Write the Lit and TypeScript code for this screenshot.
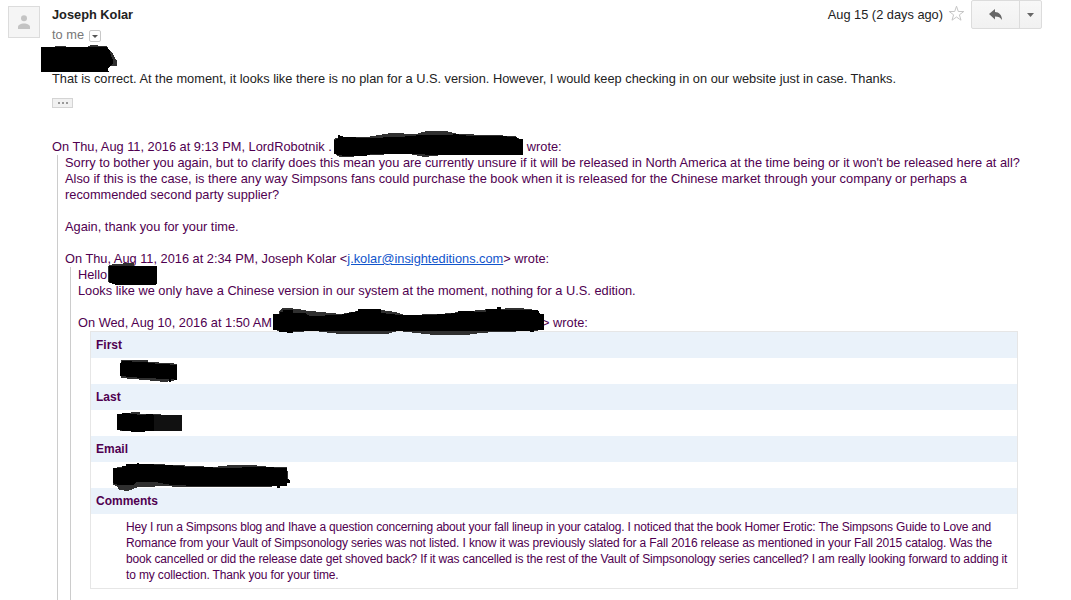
import { LitElement, html, css, svg } from "lit";
import { customElement } from "lit/decorators.js";

/* Marker strokes: grey fringe under a solid black core. */
const strokes: { grey: string; core: string }[] = [
  {
    grey: "M55 47V46H66V47ZM88 47V46H90V45H98V46H107V48L112 52L115 58L117 61V66H110L108 68V47Z",
    core: "M41 47H107L110 51L111 56L113 60V63L110 66L108 68V71H109V72H41Z",
  },
  {
    grey: "M334 139L339 137H367L391 133L416 134L427 131H446L458 134L490 135L515 136L520 139L510 152L443 155L424 157L410 154L358 155L353 157L340 157L336 155Z",
    core: "M334 140L338 139V135L345 137L367 138L399 137L421 135L450 135L455 134L470 136L497 136L516 137L519 139H523V155H450L400 154L371 154L366 156H345L334 154Z",
  },
  {
    grey: "M108 266L113 264H123V263H134V266L136 284L116 285L108 282Z",
    core: "M109 266H157V284L155 285H122L116 285L109 282Z",
  },
  {
    grey: "M279 311L282 308H293V309H301V310L341 314L358 311L381 310L395 312L404 315L440 314L490 309L520 308L536 310L538 331L494 332L481 333L466 335H434L398 331L387 334H340L315 331L293 332L289 332L277 331Z",
    core: "M273 314H280V312H283V310H293V313L305 313L310 316L340 315L358 311V309H381V313L400 315L430 315L458 313V311H462L486 312V309H497V307H501V310H523L538 310L540 314H544V330H534V332H530V331H293V333H287V332H279V330H273Z",
  },
  {
    grey: "M121 362V360H148V362L170 363L177 364V380L165 382L145 380L121 378Z",
    core: "M120 363L123 361L140 362H148V363L177 365V380L171 379V382H169V379L142 378L120 376Z",
  },
  {
    grey: "M117 414L131 413V412H140V414L181 415L182 431L150 431L120 431Z",
    core: "M117 414L126 413L140 415L151 414L154 415V431L136 432L117 430Z",
  },
  {
    grey: "M113 468L120 467L155 464L195 466L213 467L232 465H253L270 467L287 467L289 483L270 487H172V486L138 487L128 491L119 490L117 486L113 485Z",
    core: "M113 468H122V466H126V464H136L138 463L140 464L168 465L189 467H200L225 468L260 467L287 468V479L290 480V483H287V486H280V488H277V486L200 486L172 485L155 482L137 482L133 485L118 485L113 483Z",
  },
];

@customElement("app-root")
export class AppRoot extends LitElement {
  static styles = css`
    :host {
      display: block;
      position: relative;
      box-sizing: border-box;
      width: 1071px;
      height: 600px;
      overflow: hidden;
      background: #fff;
      color: #222;
      font: 12.8px/16px "Liberation Sans", Arial, sans-serif;
      white-space: nowrap;
    }
    .header {
      display: flex;
      height: 71px;
      box-sizing: border-box;
      padding-left: 8px;
    }
    .avatar {
      width: 30px;
      height: 30px;
      margin-top: 6px;
      border: 1px solid #dcdcdc;
      background: #f5f5f5;
    }
    .who {
      margin: 6px 0 0 12px;
      flex: 1;
    }
    .name {
      font-weight: bold;
      line-height: 17px;
    }
    .to {
      display: flex;
      color: #777;
      line-height: 16px;
      padding-top: 4px;
    }
    .details {
      box-sizing: border-box;
      width: 12px;
      height: 12px;
      border: 1px solid #c8c8c8;
      border-radius: 2px;
      margin: 3px 0 0 5px;
      display: block;
    }
    .date {
      margin: 6px 5px 0 0;
      line-height: 17px;
    }
    .star {
      margin-top: 5px;
    }
    .buttons {
      display: flex;
      box-sizing: border-box;
      width: 71px;
      height: 29px;
      margin: 0 29px 0 6px;
      border: 1px solid #dcdcdc;
      border-radius: 2px;
      background: linear-gradient(#f8f8f8, #f1f1f1);
    }
    .reply {
      width: 47px;
      border-right: 1px solid #dcdcdc;
    }
    .more {
      flex: 1;
    }
    svg {
      display: block;
    }
    .body {
      padding-left: 52px;
    }
    .trim {
      display: flex;
      box-sizing: border-box;
      width: 21px;
      height: 10px;
      margin: 11px 0 30px;
      border: 1px solid #d4d4d4;
      background: #f1f1f1;
      align-items: center;
      justify-content: center;
      gap: 2px;
    }
    .trim i {
      width: 2px;
      height: 2px;
      background: #999;
    }
    .quoted {
      padding-top: 1px;
      color: #500050;
    }
    .quote {
      margin-left: 5px;
      padding-left: 7px;
      border-left: 1px solid #ccc;
    }
    .deep {
      padding-bottom: 30px;
    }
    .gap1 {
      display: inline-block;
      width: 195px;
    }
    .gap2 {
      display: inline-block;
      width: 270px;
    }
    .blank {
      height: 16px;
    }
    .mail {
      color: #15c;
      text-decoration: underline;
    }
    .form {
      box-sizing: border-box;
      width: 928px;
      height: 258px;
      margin-left: 12px;
      border: 1px solid #e6e6e6;
      font-size: 12px;
    }
    .label {
      height: 26px;
      box-sizing: border-box;
      padding: 5px 5px 0;
      background: #eaf2fa;
      font-weight: bold;
    }
    .value {
      height: 26px;
    }
    .comments {
      padding: 5px 0 0 35px;
    }
    .l1 {
      letter-spacing: -0.185px;
    }
    .l2 {
      letter-spacing: -0.139px;
    }
    .l3 {
      letter-spacing: -0.166px;
    }
    .l4 {
      letter-spacing: -0.143px;
    }
    .ink {
      position: absolute;
      left: 0;
      top: 0;
      pointer-events: none;
    }
  `;

  render() {
    return html`
      <div class="header">
        <svg class="avatar" viewBox="0 0 30 30">
          <circle cx="15" cy="11.300" r="3" fill="#c4c4c4" />
          <path d="M9 22v-2c0-2 3-3.500 6-3.500s6 1.500 6 3.500v2z" fill="#c4c4c4" />
        </svg>
        <div class="who">
          <div class="name">Joseph Kolar</div>
          <div class="to">
            <span>to me</span>
            <svg class="details" viewBox="1 1 10 10"><path d="M3 5h6L6 8z" fill="#555" /></svg>
          </div>
        </div>
        <div class="date">Aug 15 (2 days ago)</div>
        <svg class="star" width="17" height="17" viewBox="0 0 17 17">
          <path
            d="M8.500 1.200L10.300 6.500H15.800L11.400 9.800L13 15.200L8.500 12L4 15.200L5.600 9.800L1.200 6.500H6.700Z"
            fill="#fff" stroke="#c6c6c6" stroke-width="1" />
        </svg>
        <div class="buttons">
          <svg class="reply" height="27" viewBox="0 0 47 27">
            <path d="M17 13L23 8V11C27 11 30 14 30 19C28.500 16.500 26.500 15.500 23 15.500V18.500Z" fill="#666" />
          </svg>
          <svg class="more" height="27" viewBox="0 0 21 27"><path d="M7 12h7l-3.500 4z" fill="#666" /></svg>
        </div>
      </div>
      <div class="body">
        <div>That is correct. At the moment, it looks like there is no plan for a U.S. version. However, I would keep checking in on our website just in case. Thanks.</div>
        <div class="trim"><i></i><i></i><i></i></div>
        <div class="quoted">
          <div>On Thu, Aug 11, 2016 at 9:13 PM, LordRobotnik .<span class="gap1"></span>wrote:</div>
          <div class="quote">
            <div>Sorry to bother you again, but to clarify does this mean you are currently unsure if it will be released in North America at the time being or it won't be released here at all?</div>
            <div>Also if this is the case, is there any way Simpsons fans could purchase the book when it is released for the Chinese market through your company or perhaps a</div>
            <div>recommended second party supplier?</div>
            <div class="blank"></div>
            <div>Again, thank you for your time.</div>
            <div class="blank"></div>
            <div>On Thu, Aug 11, 2016 at 2:34 PM, Joseph Kolar &lt;<span class="mail">j.kolar@insighteditions.com</span>&gt; wrote:</div>
            <div class="quote deep">
              <div>Hello</div>
              <div>Looks like we only have a Chinese version in our system at the moment, nothing for a U.S. edition.</div>
              <div class="blank"></div>
              <div>On Wed, Aug 10, 2016 at 1:50 AM<span class="gap2"></span>&gt; wrote:</div>
              <div class="form">
                <div class="label">First</div>
                <div class="value"></div>
                <div class="label">Last</div>
                <div class="value"></div>
                <div class="label">Email</div>
                <div class="value"></div>
                <div class="label">Comments</div>
                <div class="comments">
                  <div class="l1">Hey I run a Simpsons blog and Ihave a question concerning about your fall lineup in your catalog. I noticed that the book Homer Erotic: The Simpsons Guide to Love and</div>
                  <div class="l2">Romance from your Vault of Simpsonology series was not listed. I know it was previously slated for a Fall 2016 release as mentioned in your Fall 2015 catalog. Was the</div>
                  <div class="l3">book cancelled or did the release date get shoved back? If it was cancelled is the rest of the Vault of Simpsonology series cancelled? I am really looking forward to adding it</div>
                  <div class="l4">to my collection. Thank you for your time.</div>
                </div>
              </div>
            </div>
          </div>
        </div>
      </div>
      <svg class="ink" width="1071" height="600" shape-rendering="crispEdges">
        ${strokes.map((s) => svg`<path d=${s.grey} fill="#303030" /><path d=${s.core} fill="#000" />`)}
        <path d="M154 415H182V431H154Z" fill="#111" />
      </svg>
    `;
  }
}
